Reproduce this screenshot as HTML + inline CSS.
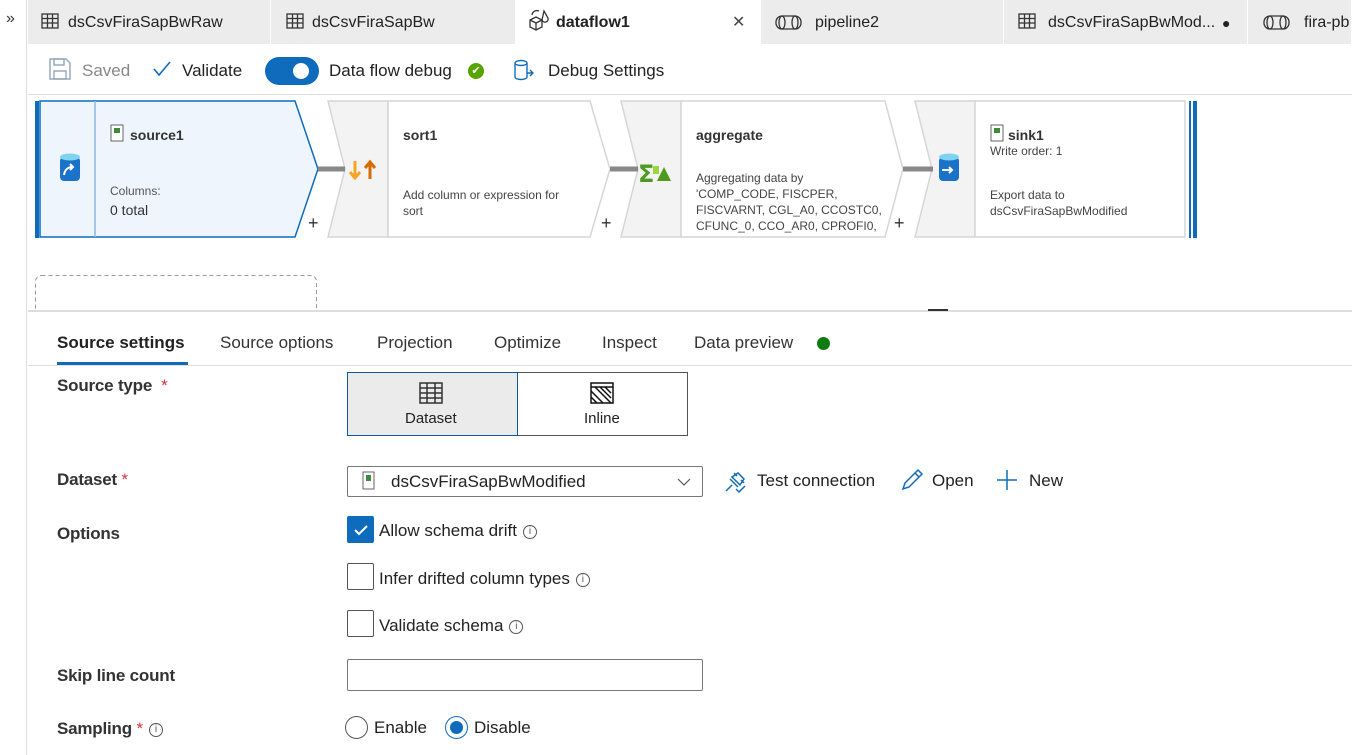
<!DOCTYPE html>
<html><head><meta charset="utf-8"><style>
*{box-sizing:border-box;margin:0;padding:0}
body{width:1352px;height:755px;overflow:hidden;background:#fff;font-family:"Liberation Sans",sans-serif;color:#222;position:relative}
.a{position:absolute;white-space:nowrap}
.tab{position:absolute;top:0;height:44px;background:#ececec;border-right:1px solid #fff;font-size:16px;line-height:46px;padding-left:40px}
.lbl{font-size:17px;font-weight:bold;color:#333;letter-spacing:-.2px}
.star{color:#d13438;font-weight:normal}
.cb{position:absolute;width:27px;height:27px;border:1px solid #555;border-radius:2px;background:#fff}
.info{display:inline-block;width:14px;height:14px;border:1px solid #555;border-radius:50%;font-size:10px;line-height:12px;text-align:center;vertical-align:2px;margin-left:6px;font-weight:normal;color:#555}
.t17{font-size:17px;color:#222}
</style></head><body>
<!-- left rail -->
<div class="a" style="left:0;top:0;width:27px;height:755px;border-right:1px solid #ddd;background:#fff"></div>
<div class="a" style="left:6px;top:10px;font-size:16px;color:#333">»</div>
<!-- tabs -->
<div class="a" style="left:28px;top:0;width:1324px;height:44px;background:#ececec"></div>
<div class="tab" style="left:28px;width:243px">dsCsvFiraSapBwRaw</div>
<div class="tab" style="left:272px;width:244px">dsCsvFiraSapBw</div>
<div class="tab" style="left:516px;width:245px;background:#fff;font-weight:bold">dataflow1<span style="position:absolute;left:216px;font-weight:normal;color:#444">✕</span></div>
<div class="tab" style="left:761px;width:243px;padding-left:54px">pipeline2</div>
<div class="tab" style="left:1005px;width:243px;padding-left:43px">dsCsvFiraSapBwMod...<span style="position:absolute;left:217px;font-size:14px">●</span></div>
<div class="tab" style="left:1249px;width:103px;padding-left:55px">fira-pb</div>
<svg class="a" style="left:0;top:0" width="1352" height="44">
<g fill="none" stroke="#333" stroke-width="1.3">
<rect x="42" y="14" width="16" height="14"/><path d="M42 18.5h16M42 23h16M47.5 14v14M52.5 14v14"/>
<rect x="287" y="14" width="16" height="14"/><path d="M287 18.5h16M287 23h16M292.5 14v14M297.5 14v14"/>
<rect x="1019" y="14" width="16" height="14"/><path d="M1019 18.5h16M1019 23h16M1024.5 14v14M1029.5 14v14"/>
<path d="M530 20l6-3 6 3v7l-6 3-6-3z M530 20l6 3 6-3M536 23v7 M544 11l4 7a3 3 0 0 1-6 2z M532 15a5 5 0 0 1 7-4"/>
<rect x="776" y="16" width="25" height="13" rx="6"/><ellipse cx="782" cy="22.5" rx="3" ry="6.5"/><ellipse cx="795" cy="22.5" rx="3" ry="6.5"/>
<rect x="1264" y="16" width="25" height="13" rx="6"/><ellipse cx="1270" cy="22.5" rx="3" ry="6.5"/><ellipse cx="1283" cy="22.5" rx="3" ry="6.5"/>
</g></svg>
<!-- toolbar -->
<div class="a" style="left:28px;top:94px;width:1324px;height:1px;background:#ddd"></div>
<svg class="a" style="left:48px;top:57px" width="24" height="24"><g fill="none" stroke="#9ab" stroke-width="1.5"><path d="M2 2h16l4 4v16H2z"/><rect x="6" y="2" width="10" height="6"/><rect x="6" y="14" width="12" height="8"/></g></svg>
<div class="a t17" style="left:82px;top:61px;color:#888">Saved</div>
<svg class="a" style="left:152px;top:60px" width="20" height="18"><path d="M2 9l5 6L18 2" fill="none" stroke="#0f6cbd" stroke-width="1.6"/></svg>
<div class="a t17" style="left:182px;top:61px">Validate</div>
<div class="a" style="left:265px;top:57px;width:54px;height:28px;border-radius:14px;background:#0f6cbd"></div>
<div class="a" style="left:293px;top:63px;width:16px;height:16px;border-radius:50%;background:#fff"></div>
<div class="a t17" style="left:329px;top:61px">Data flow debug</div>
<div class="a" style="left:468px;top:63px;width:16px;height:16px;border-radius:50%;background:#57a300;color:#fff;font-size:11px;line-height:16px;text-align:center">✔</div>
<svg class="a" style="left:512px;top:59px" width="24" height="24"><g fill="none" stroke="#0f6cbd" stroke-width="1.4"><path d="M3 4a6 2.5 0 0 1 12 0v14a6 2.5 0 0 1-12 0z M3 4a6 2.5 0 0 0 12 0"/><path d="M15 14h6M18 11l3 3-3 3"/></g></svg>
<div class="a t17" style="left:548px;top:61px">Debug Settings</div>
<!-- canvas -->
<svg class="a" style="left:0;top:95px" width="1352" height="216">
<g stroke="#d6d6d6" stroke-width="1.5">
<path d="M328 6h60v136h-60l17-68z" fill="#f3f3f3"/><path d="M388 6h202l20 68-20 68H388z" fill="#fff"/>
<path d="M621 6h60v136h-60l17-68z" fill="#f3f3f3"/><path d="M681 6h204l18 68-18 68H681z" fill="#fff"/>
<path d="M915 6h60v136h-60l17-68z" fill="#f3f3f3"/><path d="M975 6h210v136H975z" fill="#fff"/>
</g>
<path d="M40 6h255l23 68-23 68H40z" fill="#eef5fc" stroke="#0f6cbd" stroke-width="1.5"/>
<path d="M95 6v136" stroke="#8ab8e6" stroke-width="1.5"/>
<rect x="35" y="6" width="4" height="137" fill="#0f6cbd"/>
<rect x="1189" y="6" width="8" height="137" fill="#0f6cbd"/><rect x="1191" y="6" width="2" height="137" fill="#fff"/>
<g stroke="#888" stroke-width="5"><path d="M318 74h27M610 74h28M903 74h30"/></g>
<g font-size="18" fill="#333" font-family="Liberation Sans"><text x="308" y="134">+</text><text x="601" y="134">+</text><text x="894" y="134">+</text></g>
<!-- source icon -->
<rect x="60" y="62" width="20" height="24" rx="4" fill="#1a73c8"/><ellipse cx="70" cy="62" rx="10" ry="3.5" fill="#7fd3f0"/><path d="M64 80c1-6 4-8 9-8M70 69l3 3-3 3" fill="none" stroke="#fff" stroke-width="2"/>
<!-- sink icon -->
<rect x="939" y="62" width="20" height="24" rx="4" fill="#1a73c8"/><ellipse cx="949" cy="62" rx="10" ry="3.5" fill="#7fd3f0"/><path d="M942 75h10M949 72l3 3-3 3" fill="none" stroke="#fff" stroke-width="2"/>
<!-- sort icon -->
<path d="M355 66v16M350 77l5 6 5-6" stroke="#f5a623" stroke-width="3" fill="none"/><path d="M370 84v-16M365 73l5-6 5 6" stroke="#d86a00" stroke-width="3" fill="none"/>
<!-- agg icon -->
<text x="638" y="87" font-size="24" fill="#4d9a1e" font-family="DejaVu Sans" font-weight="bold">Σ</text><path d="M657 86l7-14 7 14z" fill="#4d9a1e"/><rect x="653" y="71" width="6" height="8" fill="#9ad63c"/>
<!-- csv icons -->
<g><rect x="111" y="30" width="12" height="16" fill="#fff" stroke="#666"/><rect x="114" y="33" width="6" height="5" fill="#3c8c3c"/></g>
<g><rect x="991" y="30" width="12" height="16" fill="#fff" stroke="#666"/><rect x="994" y="33" width="6" height="5" fill="#3c8c3c"/></g>
<rect x="35.5" y="180.5" width="281" height="40" rx="6" fill="none" stroke="#999" stroke-dasharray="4 3"/>
<g font-family="Liberation Sans">
<text x="130" y="45" font-size="14" font-weight="bold" fill="#333">source1</text>
<text x="110" y="100" font-size="12" fill="#555">Columns:</text>
<text x="110" y="120" font-size="14" fill="#333">0 total</text>
<text x="403" y="45" font-size="14" font-weight="bold" fill="#333">sort1</text>
<text x="403" y="104" font-size="12" fill="#444">Add column or expression for</text>
<text x="403" y="120" font-size="12" fill="#444">sort</text>
<text x="696" y="45" font-size="14" font-weight="bold" fill="#333">aggregate</text>
<g font-size="12" fill="#444"><text x="696" y="87">Aggregating data by</text><text x="696" y="103">'COMP_CODE, FISCPER,</text><text x="696" y="119">FISCVARNT, CGL_A0, CCOSTC0,</text><text x="696" y="135">CFUNC_0, CCO_AR0, CPROFI0,</text></g>
<text x="1008" y="45" font-size="14" font-weight="bold" fill="#333">sink1</text>
<text x="990" y="60" font-size="12" fill="#444">Write order: 1</text>
<text x="990" y="104" font-size="12" fill="#444">Export data to</text>
<text x="990" y="120" font-size="12" fill="#444">dsCsvFiraSapBwModified</text>
</g>
</svg>
<div class="a" style="left:28px;top:310px;width:1324px;height:2px;background:#ddd"></div>
<div class="a" style="left:928px;top:309px;width:20px;height:2px;background:#333"></div>
<!-- panel tabs -->
<div class="a t17" style="left:57px;top:333px;font-weight:bold;color:#222">Source settings</div>
<div class="a" style="left:57px;top:362px;width:131px;height:3px;background:#0f6cbd"></div>
<div class="a t17" style="left:220px;top:333px;color:#333">Source options</div>
<div class="a t17" style="left:377px;top:333px;color:#333">Projection</div>
<div class="a t17" style="left:494px;top:333px;color:#333">Optimize</div>
<div class="a t17" style="left:602px;top:333px;color:#333">Inspect</div>
<div class="a t17" style="left:694px;top:333px;color:#333">Data preview</div>
<div class="a" style="left:817px;top:337px;width:13px;height:13px;border-radius:50%;background:#107c10"></div>
<div class="a" style="left:28px;top:365px;width:1324px;height:1px;background:#e0e0e0"></div>
<!-- form -->
<div class="a lbl" style="left:57px;top:376px">Source type <span class="star">&nbsp;*</span></div>
<div class="a" style="left:347px;top:372px;width:171px;height:64px;background:#ebebeb;border:1px solid #0f5a9c"></div>
<div class="a" style="left:518px;top:372px;width:170px;height:64px;border:1px solid #555;border-left:none"></div>
<svg class="a" style="left:418px;top:381px" width="28" height="24"><g fill="none" stroke="#333" stroke-width="1.5"><rect x="2" y="2" width="22" height="20"/><path d="M2 7h22M2 12h22M2 17h22M9 2v20M17 2v20"/></g></svg>
<svg class="a" style="left:589px;top:381px" width="28" height="24"><g fill="none" stroke="#111" stroke-width="1.5"><rect x="2" y="2" width="22" height="20"/><path d="M2 6h22M6 6l16 16M11 6l11 11M16 6l6 6M2 10l12 12M2 16l6 6"/></g></svg>
<div class="a" style="left:405px;top:410px;font-size:15px">Dataset</div>
<div class="a" style="left:584px;top:410px;font-size:15px">Inline</div>
<div class="a lbl" style="left:57px;top:470px">Dataset <span class="star">*</span></div>
<div class="a" style="left:347px;top:466px;width:356px;height:31px;border:1px solid #777;border-radius:2px"></div>
<svg class="a" style="left:362px;top:471px" width="14" height="20"><rect x="1" y="1" width="11" height="17" fill="#fff" stroke="#666"/><rect x="4" y="4" width="5" height="6" fill="#3c8c3c"/></svg>
<div class="a t17" style="left:391px;top:472px">dsCsvFiraSapBwModified</div>
<svg class="a" style="left:677px;top:477px" width="14" height="10"><path d="M1 2l6 6 6-6" fill="none" stroke="#555" stroke-width="1.2"/></svg>
<svg class="a" style="left:722px;top:467px" width="28" height="28"><g fill="none" stroke="#0f6cbd" stroke-width="1.5"><path d="M8 12l8 8M10 10l6-4 6 6-4 6z M4 24l6-6M12 6l3 3M19 13l3 3M14 22l3 3 6-6"/></g></svg>
<div class="a t17" style="left:757px;top:471px">Test connection</div>
<svg class="a" style="left:899px;top:467px" width="26" height="26"><path d="M4 22l2-6L19 3l4 4L10 20z M16 6l4 4" fill="none" stroke="#0f6cbd" stroke-width="1.5"/></svg>
<div class="a t17" style="left:932px;top:471px">Open</div>
<svg class="a" style="left:995px;top:468px" width="24" height="24"><path d="M12 2v20M2 12h20" stroke="#0f6cbd" stroke-width="1.5"/></svg>
<div class="a t17" style="left:1029px;top:471px">New</div>
<div class="a lbl" style="left:57px;top:524px">Options</div>
<div class="cb" style="left:347px;top:516px;background:#0f6cbd;border-color:#0f6cbd"></div>
<svg class="a" style="left:351px;top:520px" width="20" height="20"><path d="M4 10l4 4 8-8" fill="none" stroke="#fff" stroke-width="2"/></svg>
<div class="a t17" style="left:379px;top:521px">Allow schema drift<span class="info">i</span></div>
<div class="cb" style="left:347px;top:563px"></div>
<div class="a t17" style="left:379px;top:569px">Infer drifted column types<span class="info">i</span></div>
<div class="cb" style="left:347px;top:610px"></div>
<div class="a t17" style="left:379px;top:616px">Validate schema<span class="info">i</span></div>
<div class="a lbl" style="left:57px;top:666px">Skip line count</div>
<div class="a" style="left:347px;top:659px;width:356px;height:32px;border:1px solid #777;border-radius:2px"></div>
<div class="a lbl" style="left:57px;top:719px">Sampling <span class="star">*</span><span class="info">i</span></div>
<div class="a" style="left:345px;top:716px;width:23px;height:23px;border:1px solid #555;border-radius:50%"></div>
<div class="a t17" style="left:374px;top:718px">Enable</div>
<div class="a" style="left:445px;top:716px;width:23px;height:23px;border:1px solid #0f6cbd;border-radius:50%"></div>
<div class="a" style="left:450px;top:721px;width:13px;height:13px;background:#0f6cbd;border-radius:50%"></div>
<div class="a t17" style="left:474px;top:718px">Disable</div>
</body></html>
